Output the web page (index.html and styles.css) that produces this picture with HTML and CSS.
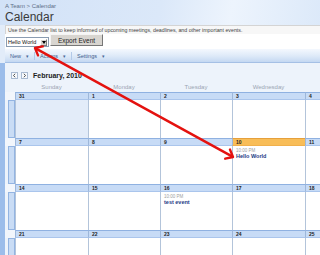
FILE: index.html
```html
<!DOCTYPE html>
<html>
<head>
<meta charset="utf-8">
<link rel="stylesheet" href="styles.css">
</head>
<body>
<div class="top">
  <div class="crumb">A Team &gt; Calendar</div>
  <h1 class="title">Calendar</h1>
</div>
<div class="below">
  <div class="desc">Use the Calendar list to keep informed of upcoming meetings, deadlines, and other important events.</div>
  <div class="filter">
    <div class="select"><span class="val">Hello World</span><span class="drop"><svg width="4" height="3" viewBox="0 0 4 3"><path d="M0 0H4L2 3Z" fill="#000"/></svg></span></div>
    <button class="export">Export Event</button>
  </div>
  <div class="toolbar">
    <span class="tb-item">New <span class="caret">▾</span></span>
    <span class="sep"></span>
    <span class="tb-item">Actions <span class="caret">▾</span></span>
    <span class="sep"></span>
    <span class="tb-item">Settings <span class="caret">▾</span></span>
  </div>
  <div class="main">
    <div class="nav">
      <span class="navbtn"><svg width="5" height="5" viewBox="0 0 5 5"><path d="M3.2 0.8L1.4 2.5L3.2 4.2" fill="none" stroke="#555" stroke-width="1"/></svg></span>
      <span class="navbtn"><svg width="5" height="5" viewBox="0 0 5 5"><path d="M1.8 0.8L3.6 2.5L1.8 4.2" fill="none" stroke="#555" stroke-width="1"/></svg></span>
      <span class="month">February, 2010</span>
    </div>
    <div class="daynames">
      <span></span><span>Sunday</span><span>Monday</span><span>Tuesday</span><span>Wednesday</span><span></span>
    </div>
    <div class="week">
      <div class="corner"></div><div class="hd">31</div><div class="hd">1</div><div class="hd">2</div><div class="hd">3</div><div class="hd">4</div>
      <div class="selcol"><div class="sel"></div></div><div class="cell other"></div><div class="cell"></div><div class="cell"></div><div class="cell"></div><div class="cell"></div>
    </div>
    <div class="week">
      <div class="corner"></div><div class="hd">7</div><div class="hd">8</div><div class="hd">9</div><div class="hd today">10</div><div class="hd">11</div>
      <div class="selcol"><div class="sel"></div></div><div class="cell"></div><div class="cell"></div><div class="cell"></div>
      <div class="cell"><div class="ev-time">10:00 PM</div><div class="ev-title">Hello World</div></div><div class="cell"></div>
    </div>
    <div class="week">
      <div class="corner"></div><div class="hd">14</div><div class="hd">15</div><div class="hd">16</div><div class="hd">17</div><div class="hd">18</div>
      <div class="selcol"><div class="sel"></div></div><div class="cell"></div><div class="cell"></div>
      <div class="cell"><div class="ev-time">10:00 PM</div><div class="ev-title">test event</div></div><div class="cell"></div><div class="cell"></div>
    </div>
    <div class="week">
      <div class="corner"></div><div class="hd">21</div><div class="hd">22</div><div class="hd">23</div><div class="hd">24</div><div class="hd">25</div>
      <div class="selcol"><div class="sel"></div></div><div class="cell"></div><div class="cell"></div><div class="cell"></div><div class="cell"></div><div class="cell"></div>
    </div>
  </div>
</div>
<svg class="annot" width="320" height="255" viewBox="0 0 320 255">
  <g fill="none" stroke="#e4120f" stroke-width="2.4" stroke-linecap="round" stroke-linejoin="round">
    <line x1="36" y1="48.6" x2="232" y2="156.4"/>
    <polyline points="42.8,46.4 35,48 38,55.4"/>
    <polyline points="225.2,158.7 233,157 230,149.6"/>
  </g>
</svg>
</body>
</html>
```
FILE: styles.css
```css
* { box-sizing: border-box; margin: 0; padding: 0; }
html, body { width: 320px; height: 255px; overflow: hidden; }
body {
  font-family: "Liberation Sans", Arial, sans-serif;
  background: #e2ecf9;
  position: relative;
}
.top {
  height: 25px;
  padding: 3px 0 0 5px;
  background: linear-gradient(100deg, #d2e2f7 0%, #dbe8f9 50%, #edf4fd 72%, #dce9f9 100%);
}
.crumb { font-size: 6px; line-height: 7px; color: #5f7088; }
.title { font-size: 12px; line-height: 14px; font-weight: normal; color: #3a3a3a; }

.below { display: flex; flex-direction: column; }
.desc {
  margin-left: 5px;
  height: 9px;
  background: #f7f7f7;
  border-top: 1px solid #d4d4d4;
  border-left: 1px solid #d4d4d4;
  font-size: 5.25px;
  line-height: 8px;
  padding-left: 2px;
  color: #444;
  white-space: nowrap;
}
.filter {
  margin-left: 5px;
  height: 15px;
  background: #fff;
  display: flex;
  align-items: flex-start;
}
.select {
  margin: 3px 0 0 1px;
  width: 43px;
  height: 10px;
  border: 1px solid #8a9cb2;
  display: flex;
  align-items: center;
  background: #fff;
}
.val { flex: 1; font-size: 5.5px; padding-left: 1px; color: #111; }
.drop {
  width: 7px; height: 7px; margin-right: 1px;
  background: #d6d3ce;
  border: 1px solid; border-color: #fff #7a7a7a #7a7a7a #fff;
  display: flex; align-items: center; justify-content: center;
}
.export {
  margin-left: 1px;
  width: 53px; height: 12px;
  font-family: "Liberation Sans", Arial, sans-serif;
  font-size: 6.5px;
  background: #d8d5d0;
  border: 1px solid; border-color: #f4f4f4 #777 #777 #f4f4f4;
  color: #222;
}
.toolbar {
  margin-left: 5px;
  height: 14px;
  background: linear-gradient(#f4f8fe, #dde9f8 55%, #c4d8f2);
  border-bottom: 1px solid #a5c0e5;
  display: flex;
  align-items: center;
  padding-left: 5px;
  font-size: 5.5px;
  color: #3d5c8c;
}
.tb-item { display: flex; align-items: center; gap: 5px; padding-right: 5px; }
.caret { font-size: 5px; color: #4a6898; }
.sep { width: 1px; height: 8px; background: #b3c9e8; margin-right: 5px; }

.main {
  border-left: 5px solid #9cbdea;
  background: #edf3fb;
  height: 192px;
  overflow: hidden;
}
.nav {
  margin-top: 8px;
  height: 9px;
  padding-left: 6px;
  display: flex;
  align-items: center;
  gap: 3px;
}
.navbtn {
  width: 7px; height: 7px;
  border: 1px solid #aabbd2;
  background: #f7f9fc;
  display: flex; align-items: center; justify-content: center;
}
.month { margin-left: 2px; font-size: 7px; font-weight: bold; color: #1c1c1c; }
.daynames {
  display: grid;
  grid-template-columns: 10px 73px 72px 72px 73px 72px;
  height: 12px;
  padding-top: 4px;
  font-size: 6px;
  line-height: 7px;
  color: #9ba5b3;
  text-align: center;
}
.week {
  display: grid;
  grid-template-columns: 10px 73px 72px 72px 73px 72px;
  grid-template-rows: 8px 38px;
}
.corner { background: #f2f6fc; }
.hd {
  background: #c7dbf6;
  border-top: 1px solid #8fb1e1;
  border-bottom: 1px solid #aac5ec;
  border-left: 1px solid #9db7da;
  font-size: 5px;
  line-height: 6px;
  font-weight: bold;
  padding-left: 3px;
  color: #1e1e1e;
}
.hd.today { background: #f8bd58; border-top-color: #e6a03c; border-bottom-color: #f0b04c; }
.selcol { padding-left: 3px; }
.sel { height: 100%; background: #c9dcf5; border: 1px solid #93b4e2; }
.cell { background: #fff; border-left: 1px solid #b3c4da; padding: 2px 0 0 3px; }
.cell.other { background: #e3ecf9; }
.ev-time { font-size: 4.5px; line-height: 5px; color: #a0a0a0; }
.ev-title { font-size: 5.5px; line-height: 7px; font-weight: bold; color: #1d3b85; }
.annot { position: absolute; left: 0; top: 0; pointer-events: none; }
```
